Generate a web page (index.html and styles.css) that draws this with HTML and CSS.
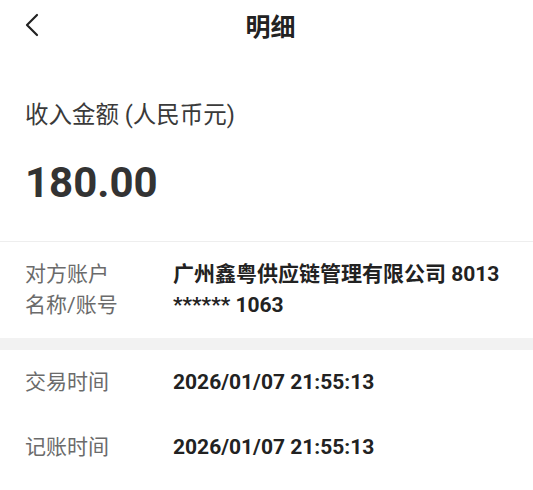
FILE: index.html
```html
<!DOCTYPE html>
<html lang="zh-CN">
<head>
  <meta charset="UTF-8">
  <meta name="viewport" content="width=device-width, initial-scale=1.0">
  <title>明细</title>
  <link rel="stylesheet" href="styles.css">
</head>
<body>
  <div class="header">
    <div class="back">
      <svg width="14" height="24" viewBox="0 0 14 24">
        <path d="M12 2 L2 12 L12 22" fill="none" stroke="#222" stroke-width="2.2" stroke-linecap="round" stroke-linejoin="round"/>
      </svg>
    </div>
    <h2>明细</h2>
    <div></div>
  </div>

  <div class="summary">
    <div class="summary-label">收入金额 (人民币元)</div>
    <div class="amount">180.00</div>
  </div>

  <div class="section">
    <div class="row">
      <div class="row-label">对方账户<br>名称/账号</div>
      <div class="row-value">广州鑫粤供应链管理有限公司 8013 ****** 1063</div>
    </div>
  </div>

  <div class="gap"></div>

  <div class="section">
    <div class="row">
      <div class="row-label">交易时间</div>
      <div class="row-value">2026/01/07 21:55:13</div>
    </div>
    <div class="row">
      <div class="row-label">记账时间</div>
      <div class="row-value">2026/01/07 21:55:13</div>
    </div>
  </div>
</body>
</html>
```

FILE: styles.css
```css
body {
  font-family: Roboto, "Noto Sans CJK SC", sans-serif;
  margin: 0;
  padding: 0;
  background-color: #fff;
  color: #222;
}
.header {
  display: grid;
  grid-template-columns: 1fr auto 1fr;
  align-items: center;
  height: 50px;
}
.back {
  padding-left: 25px;
  display: flex;
  align-items: center;
}
h2 {
  font-size: 25px;
  font-weight: bold;
  margin: 0;
  color: #222;
  padding-left: 8px;
}
.summary {
  padding: 50px 25px 33px;
  border-bottom: 1px solid #eeeeee;
}
.summary-label {
  font-size: 23.5px;
  line-height: 30px;
  color: #3a3a3a;
}
.amount {
  margin-top: 28px;
  font-size: 42px;
  line-height: 50px;
  font-weight: bold;
  color: #333;
}
.row {
  display: grid;
  grid-template-columns: 148px 1fr;
  padding: 17px 20px 17px 25px;
  font-size: 21px;
  line-height: 31px;
}
.section:first-of-type .row {
  padding-top: 17.5px;
}
.row-label {
  color: #6b6b6b;
}
.row-value {
  font-weight: bold;
  color: #222;
}
.gap {
  height: 12px;
  background-color: #f2f2f2;
}
```
